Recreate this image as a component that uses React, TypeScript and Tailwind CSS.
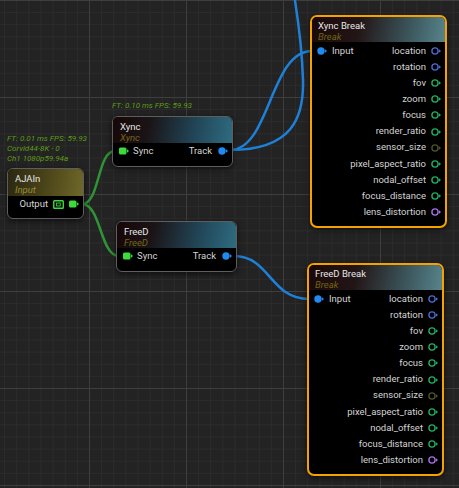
import type { ReactNode } from 'react';

type PinKind = 'exec' | 'dot' | 'ring';

const BLUE = '#1f8bf0';
const GREEN_EXEC = '#3ddc3d';

function Pin({ kind, color }: { kind: PinKind; color: string }) {
  return (
    <svg width="10" height="8" viewBox="0 0 10 8" className="shrink-0">
      {kind === 'exec' && <rect x="0" y="0.5" width="7.5" height="7" rx="1.6" fill={color} />}
      {kind === 'dot' && <circle cx="4" cy="4" r="3.7" fill={color} />}
      {kind === 'ring' && <circle cx="4" cy="4" r="3.1" fill="none" stroke={color} strokeWidth="1.4" />}
      <path d="M8 2.3 L10 4 L8 5.7 Z" fill={color} />
    </svg>
  );
}

function MonitorIcon() {
  return (
    <svg width="11" height="9" viewBox="0 0 11 9" className="shrink-0">
      <rect x="0.75" y="0.75" width="9.5" height="7.5" rx="0.8" fill="none" stroke={GREEN_EXEC} strokeWidth="1.4" />
      <rect x="3.6" y="3" width="3.6" height="3" fill="none" stroke={GREEN_EXEC} strokeWidth="0.9" />
    </svg>
  );
}

const breakOutputs: [string, string][] = [
  ['location', '#4a68cc'],
  ['rotation', '#4a68cc'],
  ['fov', '#1fae5c'],
  ['zoom', '#1fae5c'],
  ['focus', '#1fae5c'],
  ['render_ratio', '#1fae5c'],
  ['sensor_size', '#4d5322'],
  ['pixel_aspect_ratio', '#1fae5c'],
  ['nodal_offset', '#1fae5c'],
  ['focus_distance', '#1fae5c'],
  ['lens_distortion', '#a46ee6'],
];

function Header({ title, subtitle, className, subClass }: { title: string; subtitle: string; className: string; subClass: string }) {
  return (
    <div className={className}>
      <div className="leading-[11px] text-[#e6e6e6]">{title}</div>
      <div className={`leading-[11px] italic ${subClass}`}>{subtitle}</div>
    </div>
  );
}

function BreakNode({ title, className }: { title: string; className: string }) {
  return (
    <div className={`absolute w-[137px] rounded-[7px] border-2 border-[#f5a100] bg-black overflow-hidden shadow-[0_2px_6px_rgba(0,0,0,0.6)] ${className}`}>
      <Header
        title={title}
        subtitle="Break"
        className="h-[25px] px-[6px] pt-[3px] bg-[linear-gradient(100deg,#1c0909_0%,#221516_35%,#3d5a60_75%,#58848b_100%)]"
        subClass="text-[#6f6510]"
      />
      <div className="pt-[1px] pb-[6px]">
        {breakOutputs.map(([name, color], i) => (
          <div key={name} className="h-[16.1px] flex items-center pl-[5px] pr-[4px]">
            {i === 0 && (
              <div className="flex items-center gap-[5px]">
                <Pin kind="dot" color={BLUE} />
                <span>Input</span>
              </div>
            )}
            <div className="ml-auto flex items-center gap-[5px]">
              <span>{name}</span>
              <Pin kind="ring" color={color} />
            </div>
          </div>
        ))}
      </div>
    </div>
  );
}

function SourceNode({ title, className, children }: { title: string; className: string; children?: ReactNode }) {
  return (
    <div className={`absolute w-[121px] rounded-[6px] border border-[#5e5e5e] bg-black overflow-hidden shadow-[0_2px_6px_rgba(0,0,0,0.6)] ${className}`}>
      <Header
        title={title}
        subtitle={title}
        className="h-[26px] px-[7px] pt-[4px] bg-[linear-gradient(100deg,#170707_0%,#1a1416_30%,#22485a_70%,#2f6b80_100%)]"
        subClass="text-[#75661a]"
      />
      <div className="h-[16px] flex items-center pl-[6px] pr-[4px]">
        <div className="flex items-center gap-[4px]">
          <Pin kind="exec" color={GREEN_EXEC} />
          <span>Sync</span>
        </div>
        <div className="ml-auto flex items-center gap-[6px]">
          <span>Track</span>
          <Pin kind="dot" color={BLUE} />
        </div>
      </div>
      <div className="h-[7px]" />
      {children}
    </div>
  );
}

export default function App() {
  return (
    <div className="relative w-[459px] h-[488px] overflow-hidden bg-[#232323] bg-[linear-gradient(to_right,#3e3e3e_1px,transparent_1px),linear-gradient(to_bottom,#3e3e3e_1px,transparent_1px),linear-gradient(to_right,#2c2c2c_1px,transparent_1px),linear-gradient(to_bottom,#2c2c2c_1px,transparent_1px)] [background-size:97px_97px,97px_97px,12.125px_12.125px,12.125px_12.125px] [background-position:-8px_0] font-[Roboto,sans-serif] text-[9.5px] text-[#d4d4d4]">
      {/* wires */}
      <svg className="absolute inset-0" width="459" height="488" viewBox="0 0 459 488" fill="none">
        <path d="M82 204 C 100 204, 97 151, 115 151" stroke="#2f9435" strokeWidth="2.5" />
        <path d="M82 204 C 101 204, 100 256, 119 256" stroke="#2f9435" strokeWidth="2.5" />
        <path d="M230 150 C 270 150, 270 51, 312 51" stroke="#1e80d8" strokeWidth="2.5" />
        <path d="M230 150 C 292 150, 304 118, 303 80 C 302 45, 298 18, 293 -12" stroke="#1e80d8" strokeWidth="2.5" />
        <path d="M234 256 C 270 256, 270 299, 309 299" stroke="#1e80d8" strokeWidth="2.5" />
      </svg>

      {/* stats */}
      <div className="absolute left-[7px] top-[134px] text-[8px] leading-[10px] italic text-[#5f9c14] whitespace-nowrap">
        <div>FT: 0.01 ms FPS: 59.93</div>
        <div>Corvid44-8K - 0</div>
        <div>Ch1 1080p59.94a</div>
      </div>
      <div className="absolute left-[112px] top-[101px] text-[8px] leading-[10px] italic text-[#5f9c14] whitespace-nowrap">
        FT: 0.10 ms FPS: 59.93
      </div>

      {/* AJAIn */}
      <div className="absolute left-[7px] top-[168px] w-[77px] rounded-[6px] border border-[#5e5e5e] bg-black overflow-hidden shadow-[0_2px_6px_rgba(0,0,0,0.6)]">
        <Header
          title="AJAIn"
          subtitle="Input"
          className="h-[27px] px-[7px] pt-[4px] bg-[linear-gradient(100deg,#2b2710_0%,#4a4419_50%,#706829_100%)]"
          subClass="text-[#978a3a]"
        />
        <div className="h-[16px] flex items-center justify-end gap-[5px] pr-[4px]">
          <span>Output</span>
          <MonitorIcon />
          <Pin kind="exec" color={GREEN_EXEC} />
        </div>
        <div className="h-[6px]" />
      </div>

      <SourceNode title="Xync" className="left-[112px] top-[116px]" />
      <SourceNode title="FreeD" className="left-[116px] top-[221px]" />

      <BreakNode title="Xync Break" className="left-[310px] top-[15px]" />
      <BreakNode title="FreeD Break" className="left-[307px] top-[263px]" />
    </div>
  );
}
